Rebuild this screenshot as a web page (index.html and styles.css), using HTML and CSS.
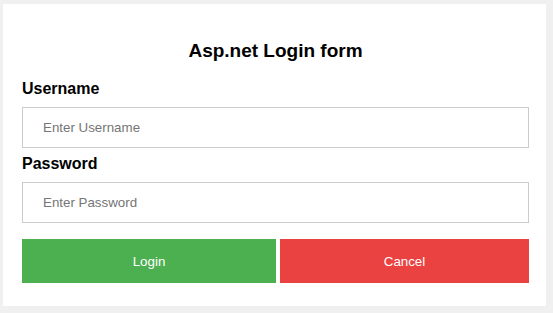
FILE: index.html
```html
<!DOCTYPE html>
<html lang="en">
<head>
    <meta charset="UTF-8">
    <meta name="viewport" content="width=device-width, initial-scale=1.0">
    <title>Asp.net Login form</title>
    <link rel="stylesheet" href="styles.css">
</head>
<body>
    <div class="login-box">
        <h2>Asp.net Login form</h2>

        <form id="login-form">
            <div class="form-group">
                <label for="username">Username</label>
                <input type="text" id="username" placeholder="Enter Username">
            </div>

            <div class="form-group">
                <label for="password">Password</label>
                <input type="password" id="password" placeholder="Enter Password">
            </div>

            <div class="buttons">
                <button type="submit" class="btn-login">Login</button>
                <button type="button" class="btn-cancel">Cancel</button>
            </div>
        </form>
    </div>
</body>
</html>
```

FILE: styles.css
```css
body {
    margin: 0;
    padding: 4px 0 0 3px;
    background-color: #f0f0f0;
    font-family: "Liberation Sans", Arial, sans-serif;
}
.login-box {
    width: 543px;
    box-sizing: border-box;
    background-color: #fff;
    padding: 36px 17px 23px 19px;
}
h2 {
    margin: 0 0 17px;
    font-size: 19px;
    line-height: 22px;
    text-align: center;
    color: #000;
}
.form-group {
    margin-bottom: 6px;
}
label {
    display: block;
    font-size: 16px;
    font-weight: bold;
    line-height: 20px;
    margin-bottom: 8px;
    color: #000;
}
input {
    display: block;
    width: 100%;
    height: 41px;
    padding: 0 20px;
    box-sizing: border-box;
    border: 1px solid #ccc;
    font-family: inherit;
    font-size: 13.33px;
    outline: none;
}
input::placeholder {
    color: #757575;
}
.buttons {
    display: grid;
    grid-template-columns: 254px 1fr;
    gap: 4px;
    margin-top: 16px;
}
button {
    height: 44px;
    border: none;
    color: white;
    font-family: inherit;
    font-size: 13.33px;
    cursor: pointer;
}
.btn-login {
    background-color: #4CAF50;
}
.btn-cancel {
    background-color: #ea4141;
}
```
